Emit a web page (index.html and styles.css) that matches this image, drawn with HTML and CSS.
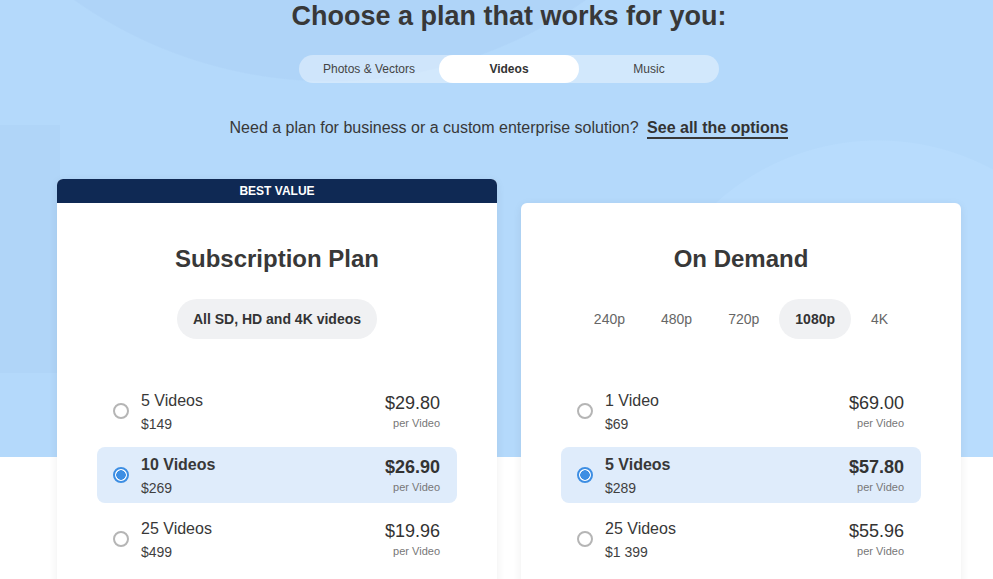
FILE: index.html
```html
<!DOCTYPE html>
<html lang="en">
<head>
<meta charset="utf-8">
<title>Choose a plan</title>
<link rel="stylesheet" href="styles.css">
</head>
<body>
<div class="page">
  <div class="container">
    <h1 class="headline">Choose a plan that works for you:</h1>

    <div class="tabs">
      <div class="tab">Photos &amp; Vectors</div>
      <div class="tab tab-active">Videos</div>
      <div class="tab">Music</div>
    </div>

    <p class="subtitle">Need a plan for business or a custom enterprise solution? <a class="subtitle-link" href="#">See all the options</a></p>

    <div class="cards">
      <div class="card card-featured">
        <div class="card-banner">BEST VALUE</div>
        <div class="card-body card-body-featured">
          <h2 class="card-title">Subscription Plan</h2>
          <div class="options">
            <span class="pill pill-active">All SD, HD and 4K videos</span>
          </div>
          <div class="rows">
            <div class="row">
              <span class="radio"></span>
              <div class="row-main">
                <div class="row-name">5 Videos</div>
                <div class="row-total">$149</div>
              </div>
              <div class="row-price">
                <div class="price">$29.80</div>
                <div class="per">per Video</div>
              </div>
            </div>
            <div class="row row-selected">
              <span class="radio radio-on"></span>
              <div class="row-main">
                <div class="row-name">10 Videos</div>
                <div class="row-total">$269</div>
              </div>
              <div class="row-price">
                <div class="price">$26.90</div>
                <div class="per">per Video</div>
              </div>
            </div>
            <div class="row">
              <span class="radio"></span>
              <div class="row-main">
                <div class="row-name">25 Videos</div>
                <div class="row-total">$499</div>
              </div>
              <div class="row-price">
                <div class="price">$19.96</div>
                <div class="per">per Video</div>
              </div>
            </div>
          </div>
        </div>
      </div>

      <div class="card card-plain">
        <div class="card-body">
          <h2 class="card-title">On Demand</h2>
          <div class="options res-tabs">
            <span class="pill">240p</span>
            <span class="pill">480p</span>
            <span class="pill">720p</span>
            <span class="pill pill-active">1080p</span>
            <span class="pill">4K</span>
          </div>
          <div class="rows">
            <div class="row">
              <span class="radio"></span>
              <div class="row-main">
                <div class="row-name">1 Video</div>
                <div class="row-total">$69</div>
              </div>
              <div class="row-price">
                <div class="price">$69.00</div>
                <div class="per">per Video</div>
              </div>
            </div>
            <div class="row row-selected">
              <span class="radio radio-on"></span>
              <div class="row-main">
                <div class="row-name">5 Videos</div>
                <div class="row-total">$289</div>
              </div>
              <div class="row-price">
                <div class="price">$57.80</div>
                <div class="per">per Video</div>
              </div>
            </div>
            <div class="row">
              <span class="radio"></span>
              <div class="row-main">
                <div class="row-name">25 Videos</div>
                <div class="row-total">$1 399</div>
              </div>
              <div class="row-price">
                <div class="price">$55.96</div>
                <div class="per">per Video</div>
              </div>
            </div>
          </div>
        </div>
      </div>
    </div>
  </div>
</div>
</body>
</html>
```

FILE: styles.css
```css
* { box-sizing: border-box; }

html, body {
  margin: 0;
  padding: 0;
  background: #ffffff;
}

body {
  font-family: "Liberation Sans", Arial, sans-serif;
  color: #333333;
}

.page {
  min-height: 579px;
  overflow: hidden;
  background:
    radial-gradient(circle 444px at 330px -362px, #afd4f8 99.7%, rgba(175,212,248,0) 100%) 0 0 / 100% 457px no-repeat,
    radial-gradient(circle 242px at 878px 382px, #b8dcfd 99.6%, rgba(184,220,253,0) 100%) 0 0 / 100% 457px no-repeat,
    linear-gradient(#b0d5f8, #b0d5f8) 0 125px / 60px 248px no-repeat,
    linear-gradient(#b4d9fb, #b4d9fb) 0 0 / 100% 457px no-repeat,
    #ffffff;
}

.container {
  width: 904px;
  margin-left: 57px;
  display: flex;
  flex-direction: column;
  align-items: center;
}

.headline {
  margin: 0;
  font-size: 27px;
  line-height: 32px;
  font-weight: 700;
  color: #383838;
  text-align: center;
}

.tabs {
  margin-top: 23px;
  width: 420px;
  height: 28px;
  display: grid;
  grid-template-columns: repeat(3, 1fr);
  background: rgba(255, 255, 255, 0.4);
  border-radius: 14px;
}

.tab {
  display: flex;
  align-items: center;
  justify-content: center;
  font-size: 12px;
  color: #444444;
  border-radius: 14px;
}

.tab-active {
  background: #ffffff;
  font-weight: 700;
  color: #333333;
}

.subtitle {
  margin: 35px 0 0;
  font-size: 16px;
  line-height: 20px;
  color: #383838;
  text-align: center;
}

.subtitle-link {
  display: inline-block;
  margin-left: 4px;
  line-height: 18px;
  font-weight: 700;
  color: #333333;
  text-decoration: none;
  border-bottom: 2px solid #383838;
}

.cards {
  margin-top: 40px;
  width: 904px;
  display: flex;
  align-items: flex-start;
  gap: 24px;
}

.card {
  width: 440px;
  border-radius: 6px;
  box-shadow: 0 2px 10px rgba(0, 0, 0, 0.07);
  background: #ffffff;
}

.card-plain {
  margin-top: 24px;
}

.card-banner {
  height: 24px;
  background: #0f2954;
  color: #ffffff;
  font-size: 12px;
  line-height: 24px;
  font-weight: 700;
  text-align: center;
  border-radius: 6px 6px 0 0;
}

.card-body {
  padding: 40px 40px 24px;
  border-radius: 6px;
}

.card-body-featured {
  border-radius: 0 0 6px 6px;
}

.card-title {
  margin: 0;
  font-size: 24px;
  line-height: 32px;
  font-weight: 700;
  color: #383838;
  text-align: center;
}

.options {
  margin-top: 24px;
  display: flex;
  justify-content: center;
  gap: 4px;
}

.pill {
  height: 40px;
  padding: 0 16px;
  display: inline-flex;
  align-items: center;
  border-radius: 20px;
  font-size: 14px;
  color: #666666;
}

.pill-active {
  background: #f0f1f3;
  color: #333333;
  font-weight: 700;
}

.rows {
  margin-top: 44px;
  display: flex;
  flex-direction: column;
  gap: 8px;
}

.row {
  height: 56px;
  padding: 0 17px 0 16px;
  display: flex;
  align-items: center;
  border-radius: 8px;
}

.row-selected {
  background: #dfecfb;
}

.radio {
  width: 16px;
  height: 16px;
  flex: none;
  border: 2px solid #b5b5b5;
  border-radius: 50%;
  margin-right: 12px;
  background: #ffffff;
}

.radio-on {
  border-color: #3d8ee3;
  background: radial-gradient(circle, #3d8ee3 0 4.5px, #ffffff 5px);
}

.row-main {
  flex: 1;
  padding-top: 2px;
}

.row-name {
  font-size: 16px;
  line-height: 22px;
  color: #383838;
}

.row-total {
  margin-top: 2px;
  font-size: 14px;
  line-height: 20px;
  color: #3f3f3f;
}

.row-price {
  text-align: right;
}

.price {
  font-size: 18px;
  line-height: 22px;
  color: #333333;
}

.per {
  margin-top: 2px;
  font-size: 11px;
  line-height: 14px;
  color: #777777;
}

.row-selected .row-name,
.row-selected .price {
  font-weight: 700;
}
```
